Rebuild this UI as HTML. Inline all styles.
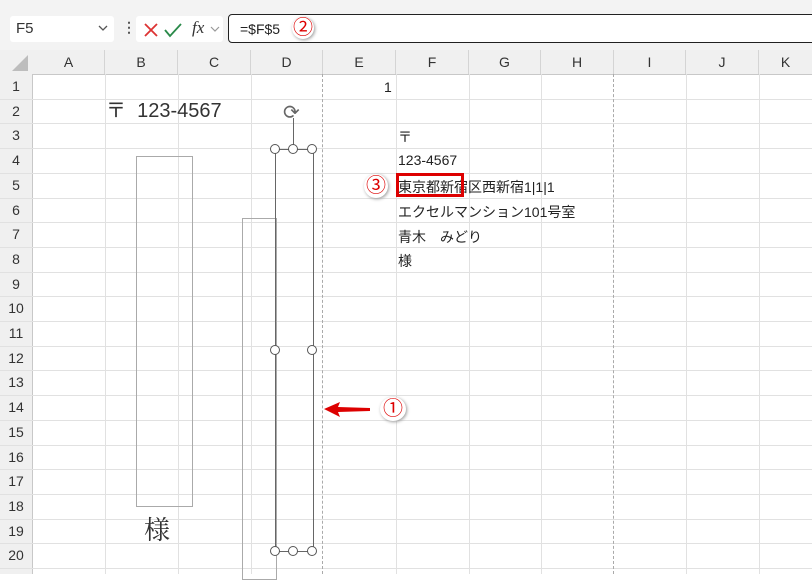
<!DOCTYPE html>
<html><head><meta charset="utf-8"><style>
body{margin:0;width:812px;height:574px;overflow:hidden;background:#fff;font-family:"Liberation Sans","Noto Sans CJK JP",sans-serif;position:relative}
.a{position:absolute}
.hl{position:absolute;left:0;width:812px;height:1px;background:#e1e1e1}
.vl{position:absolute;top:74px;height:500px;width:1px;background:#e1e1e1}
.ch{position:absolute;top:50px;height:24px;line-height:24px;text-align:center;font-size:14px;color:#333;border-right:1px solid #d4d4d4}
.rh{position:absolute;left:0;width:32px;text-align:center;font-size:14px;color:#333}
.t{position:absolute;font-size:14px;color:#222;white-space:nowrap}
.hd{position:absolute;width:8px;height:8px;border:1.5px solid #555;border-radius:50%;background:#fff}
</style></head><body>
<div class="a" style="left:0;top:0;width:812px;height:50px;background:#f3f3f3"></div>
<div class="a" style="left:10px;top:16px;width:104px;height:26px;background:#fff;border-radius:3px"></div>
<div class="t" style="left:16px;top:20px;font-size:15px;color:#333">F5</div>
<svg class="a" style="left:98px;top:25px" width="10" height="7"><path d="M1 1 L5 5 L9 1" stroke="#555" fill="none" stroke-width="1.3"/></svg>
<div class="t" style="left:122px;top:19px;font-size:14px;color:#555;font-weight:bold">⋮</div>
<div class="a" style="left:136px;top:16px;width:87px;height:26px;background:#fff;border-radius:3px"></div>
<svg class="a" style="left:143px;top:22px" width="16" height="16"><path d="M2 2 L14 14 M14 2 L2 14" stroke="#d33" stroke-width="1.8"/></svg>
<svg class="a" style="left:164px;top:22px" width="18" height="16"><path d="M1 8 L6 14 L17 2" stroke="#2a8a4a" fill="none" stroke-width="1.8"/></svg>
<div class="t" style="left:192px;top:18px;font-size:17px;font-style:italic;font-family:'Liberation Serif',serif;color:#333">fx</div>
<svg class="a" style="left:210px;top:26px" width="10" height="7"><path d="M1 1 L5 5 L9 1" stroke="#999" fill="none" stroke-width="1.2"/></svg>
<div class="a" style="left:228px;top:14px;width:600px;height:27px;border:1.5px solid #222;border-radius:4px;background:#fff"></div>
<div class="t" style="left:240px;top:21px;font-size:14px;color:#222">=$F$5</div>
<div class="a" style="left:292px;top:17px;width:22px;height:22px;border-radius:50%;background:#fff;box-shadow:1px 1px 3px #999;color:#d00;font-size:20px;line-height:22px;text-align:center">②</div>
<div class="a" style="left:0;top:50px;width:812px;height:24px;background:#f0f0f0;border-bottom:1px solid #c8c8c8"></div>
<div class="a" style="left:0;top:74px;width:32px;height:500px;background:#f0f0f0;border-right:1px solid #c8c8c8"></div>
<div class="a" style="left:12px;top:55px;width:0;height:0;border-left:16px solid transparent;border-bottom:16px solid #bdbdbd"></div>
<div class="ch" style="left:33px;width:71px">A</div><div class="ch" style="left:105px;width:72px">B</div><div class="ch" style="left:178px;width:72px">C</div><div class="ch" style="left:251px;width:71px">D</div><div class="ch" style="left:323px;width:72px">E</div><div class="ch" style="left:396px;width:72px">F</div><div class="ch" style="left:469px;width:71px">G</div><div class="ch" style="left:541px;width:72px">H</div><div class="ch" style="left:614px;width:71px">I</div><div class="ch" style="left:686px;width:72px">J</div><div class="ch" style="left:759px;width:53px">K</div>
<div id="g"></div>
<script>
var h='';for(var i=1;i<=20;i++){var y=74+(i-1)*24.7;h+='<div class="hl" style="top:'+(y+24.7).toFixed(0)+'px;left:0"></div><div class="rh" style="top:'+(y+4).toFixed(0)+'px">'+i+'</div>';}
[105,178,251,396,469,541,686,759].forEach(function(x){h+='<div class="vl" style="left:'+x+'px"></div>'});
document.getElementById('g').innerHTML=h;
</script>
<div class="a" style="left:322px;top:74px;height:500px;border-left:1px dashed #aaa"></div>
<div class="a" style="left:613px;top:74px;height:500px;border-left:1px dashed #aaa"></div>
<div class="t" style="left:384px;top:79px">1</div>
<div class="t" style="left:106px;top:94px;font-size:20px;color:#333">〒&nbsp; 123-4567</div>
<div class="a" style="left:136px;top:156px;width:55px;height:349px;border:1px solid #aaa"></div>
<div class="t" style="left:144px;top:510px;font-size:26px;color:#333;font-family:'Noto Serif CJK SC',serif">様</div>
<div class="a" style="left:242px;top:218px;width:33px;height:360px;border:1px solid #aaa"></div>
<div class="a" style="left:275px;top:149px;width:37px;height:402px;border-left:1.5px solid #666;border-right:1px solid #666"></div>
<div class="a" style="left:275px;top:149px;width:38px;height:1px;background:#666"></div>
<div class="a" style="left:275px;top:551px;width:38px;height:1px;background:#666"></div>
<div class="a" style="left:293px;top:118px;width:1px;height:31px;background:#666"></div>
<div class="t" style="left:283px;top:100px;font-size:20px;color:#666">⟳</div>
<div class="hd" style="left:270px;top:144px"></div><div class="hd" style="left:288px;top:144px"></div><div class="hd" style="left:307px;top:144px"></div>
<div class="hd" style="left:270px;top:345px"></div><div class="hd" style="left:307px;top:345px"></div>
<div class="hd" style="left:270px;top:546px"></div><div class="hd" style="left:288px;top:546px"></div><div class="hd" style="left:307px;top:546px"></div>
<div class="t" style="left:398px;top:127px">〒</div>
<div class="t" style="left:398px;top:152px">123-4567</div>
<div class="t" style="left:398px;top:177px">東京都新宿区西新宿1|1|1</div>
<div class="t" style="left:398px;top:202px">エクセルマンション101号室</div>
<div class="t" style="left:398px;top:227px">青木　みどり</div>
<div class="t" style="left:398px;top:251px">様</div>
<div class="a" style="left:396px;top:173px;width:68px;height:24px;border:3px solid #d00;box-sizing:border-box"></div>
<div class="a" style="left:364px;top:174px;width:24px;height:24px;border-radius:50%;background:#fff;box-shadow:1px 1px 3px #999;color:#d00;font-size:20px;line-height:24px;text-align:center">③</div>
<svg class="a" style="left:322px;top:400px" width="50" height="20"><path d="M2 9 L18 2 L16 7 L48 8 L48 11 L16 12 L18 17 Z" fill="#d00"/></svg>
<div class="a" style="left:380px;top:397px;width:26px;height:24px;border-radius:50%;background:#fff;box-shadow:1px 1px 3px #999;color:#d00;font-size:20px;line-height:24px;text-align:center">①</div>
</body></html>
